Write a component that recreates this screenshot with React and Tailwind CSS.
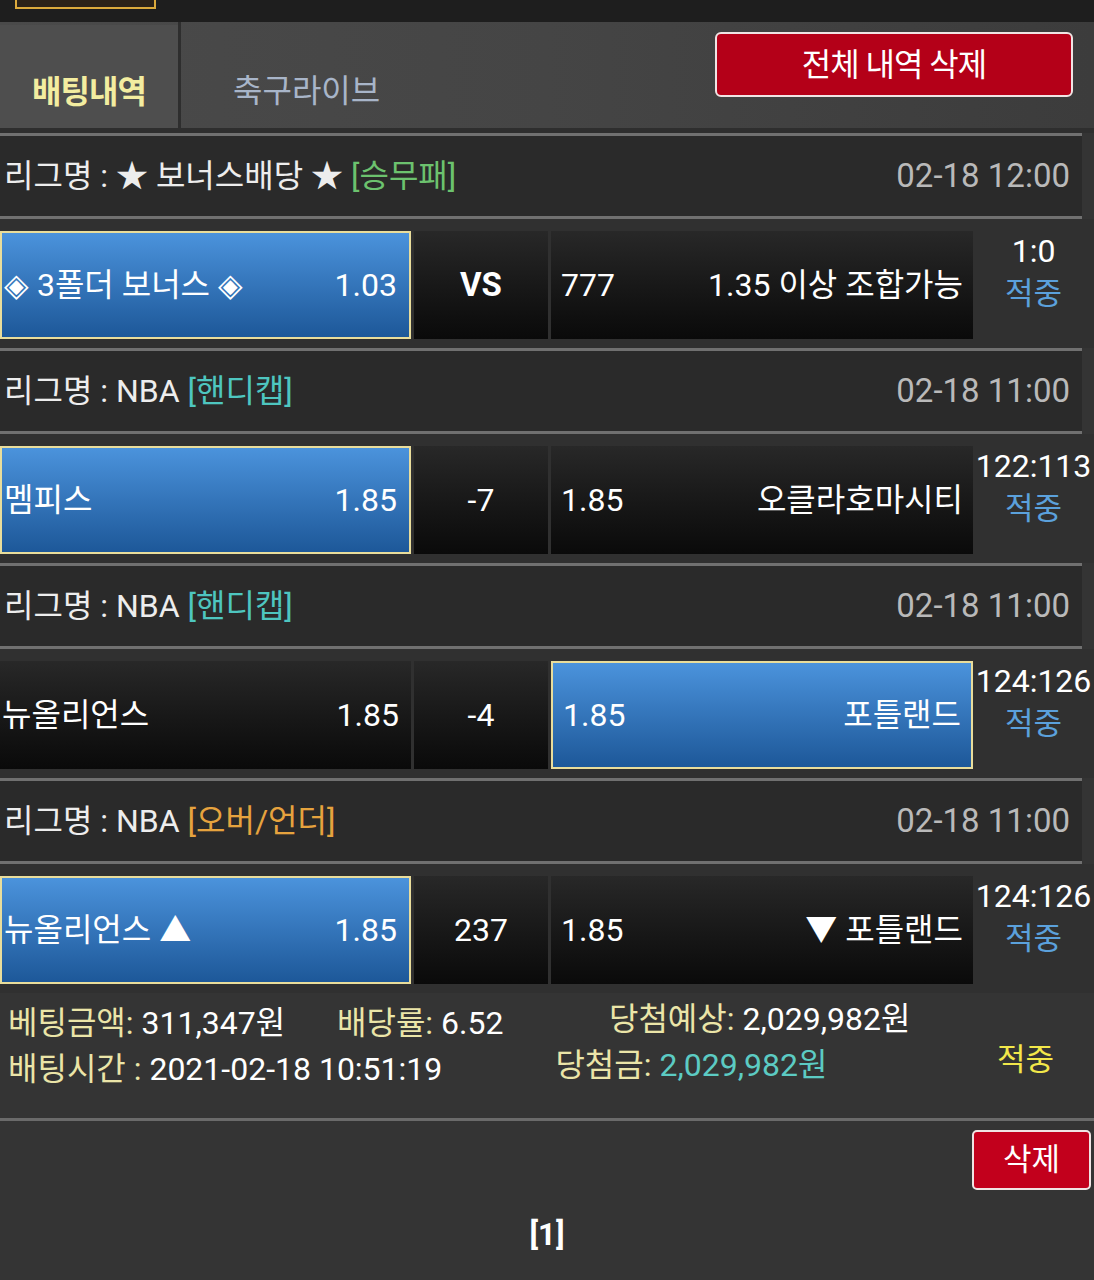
import React from 'react';

const FONT = "font-['Roboto','Noto_Sans_CJK_KR',sans-serif]";

const games = [
  {
    label: '★ 보너스배당 ★',
    type: '[승무패]',
    typeColor: 'text-[#6cc26e]',
    date: '02-18 12:00',
    home: '◈ 3폴더 보너스 ◈',
    homeOdds: '1.03',
    mid: 'VS',
    midBold: true,
    awayOdds: '777',
    away: '1.35 이상 조합가능',
    pick: 'home',
    score: '1:0',
  },
  {
    label: 'NBA',
    type: '[핸디캡]',
    typeColor: 'text-[#4ec6c0]',
    date: '02-18 11:00',
    home: '멤피스',
    homeOdds: '1.85',
    mid: '-7',
    awayOdds: '1.85',
    away: '오클라호마시티',
    pick: 'home',
    score: '122:113',
  },
  {
    label: 'NBA',
    type: '[핸디캡]',
    typeColor: 'text-[#4ec6c0]',
    date: '02-18 11:00',
    home: '뉴올리언스',
    homeOdds: '1.85',
    mid: '-4',
    awayOdds: '1.85',
    away: '포틀랜드',
    pick: 'away',
    score: '124:126',
  },
  {
    label: 'NBA',
    type: '[오버/언더]',
    typeColor: 'text-[#e6a33e]',
    date: '02-18 11:00',
    home: '뉴올리언스 ▲',
    homeOdds: '1.85',
    mid: '237',
    awayOdds: '1.85',
    away: '▼ 포틀랜드',
    pick: 'home',
    score: '124:126',
  },
];

const cellBase = 'h-[108px] flex items-center';
const darkCell = 'bg-gradient-to-b from-[#282828] to-[#0a0a0a]';
const blueCell = 'bg-gradient-to-b from-[#4b93dc] to-[#1d5899] border-2 border-[#e9dd9b]';

const GameBlock = ({ g }) => (
  <div>
    {/* league header */}
    <div className="w-[1082px] border-y-[3px] border-[#707070] bg-[#2a2a2a] h-[86px] flex items-center justify-between pl-[4px] pr-[12px]">
      <div className="text-[32px] text-[#ededed]">
        리그명 : {g.label} <span className={g.typeColor}>{g.type}</span>
      </div>
      <div className="text-[33px] text-[#b9b9b9]">{g.date}</div>
    </div>

    {/* match row */}
    <div className="flex items-start pt-[12px] pb-[9px] bg-[#303030]">
      <div className={`w-[411px] ${cellBase} justify-between pl-[2px] pr-[12px] ${g.pick === 'home' ? blueCell : darkCell}`}>
        <span className="text-[32px] text-white">{g.home}</span>
        <span className="text-[32px] text-white">{g.homeOdds}</span>
      </div>
      <div className={`w-[134px] ml-[3px] ${cellBase} justify-center ${darkCell}`}>
        <span className={`text-white ${g.midBold ? 'text-[33px] font-bold' : 'text-[32px]'}`}>{g.mid}</span>
      </div>
      <div className={`w-[422px] ml-[3px] ${cellBase} justify-between pl-[10px] pr-[10px] ${g.pick === 'away' ? blueCell : darkCell}`}>
        <span className="text-[32px] text-white">{g.awayOdds}</span>
        <span className="text-[32px] text-white">{g.away}</span>
      </div>
      <div className="flex-1 flex flex-col items-center">
        <span className="text-[32px] text-white leading-[40px]">{g.score}</span>
        <span className="text-[31px] text-[#5ba1dc] leading-[46px]">적중</span>
      </div>
    </div>
  </div>
);

export default function App() {
  return (
    <div className={`w-[1094px] min-h-[1280px] bg-[#343434] ${FONT} overflow-hidden`}>
      {/* top band */}
      <div className="h-[22px] bg-[#1e1e1e]">
        <div className="ml-[15px] w-[141px] h-[9px] border-x-2 border-b-2 border-[#dcaa3c] bg-[#2b2218]" />
      </div>

      {/* tabs */}
      <div className="h-[106px] flex bg-gradient-to-r from-[#4a4a4a] via-[#454545] to-[#3c3c3c]">
        <div className="w-[178px] mt-[3px] bg-[#4e4e4e] flex items-start justify-center pt-[47px]">
          <span className="text-[32px] leading-[40px] font-bold text-[#f3eda0] tracking-[-1px]">배팅내역</span>
        </div>
        <div className="w-[3px] bg-[#2e2e2e]" />
        <div className="flex-1 flex items-start">
          <div className="pt-[45px] pl-[52px] text-[32px] text-[#a8b5c9]">축구라이브</div>
          <div className="ml-auto mr-[21px] mt-[10px] w-[358px] h-[65px] rounded-[6px] border-2 border-[#f0e4e4] bg-[#b40018] flex items-center justify-center">
            <span className="text-[32px] text-white tracking-[-1px]">전체 내역 삭제</span>
          </div>
        </div>
      </div>

      <div className="h-[5px] bg-[#2e2e2e]" />

      {games.map((g, i) => (
        <GameBlock key={i} g={g} />
      ))}

      {/* bet summary */}
      <div className="h-[125px] flex items-start pt-[7px] pl-[8px] pr-[40px]">
        <div className="flex flex-col text-[32px] leading-[46px]">
          <div className="flex">
            <span className="w-[329px]">
              <span className="text-[#ebe5a8]">베팅금액:</span> <span className="text-white">311,347원</span>
            </span>
            <span>
              <span className="text-[#ebe5a8]">배당률:</span> <span className="text-white">6.52</span>
            </span>
          </div>
          <div>
            <span className="text-[#ebe5a8]">배팅시간 :</span> <span className="text-white">2021-02-18 10:51:19</span>
          </div>
        </div>
        <div className="ml-[52px] flex flex-col items-end text-[32px] leading-[46px]">
          <div className="-mt-[4px]">
            <span className="text-[#ebe5a8]">당첨예상:</span> <span className="text-white">2,029,982원</span>
          </div>
          <div className="mr-[83px]">
            <span className="text-[#ebe5a8]">당첨금:</span> <span className="text-[#5ccbc3]">2,029,982원</span>
          </div>
        </div>
        <div className="ml-auto mt-[37px] text-[31px] text-[#f2e84a]">적중</div>
      </div>

      <div className="h-[3px] bg-[#6a6a6a]" />

      <div className="flex justify-end pr-[3px] pt-[9px]">
        <div className="w-[119px] h-[60px] rounded-[5px] border-2 border-[#f0e4e4] bg-[#c2001c] flex items-center justify-center">
          <span className="text-[31px] text-white">삭제</span>
        </div>
      </div>

      <div className="flex justify-center pt-[22px]">
        <span className="text-[31px] font-bold text-white">[1]</span>
      </div>
    </div>
  );
}
